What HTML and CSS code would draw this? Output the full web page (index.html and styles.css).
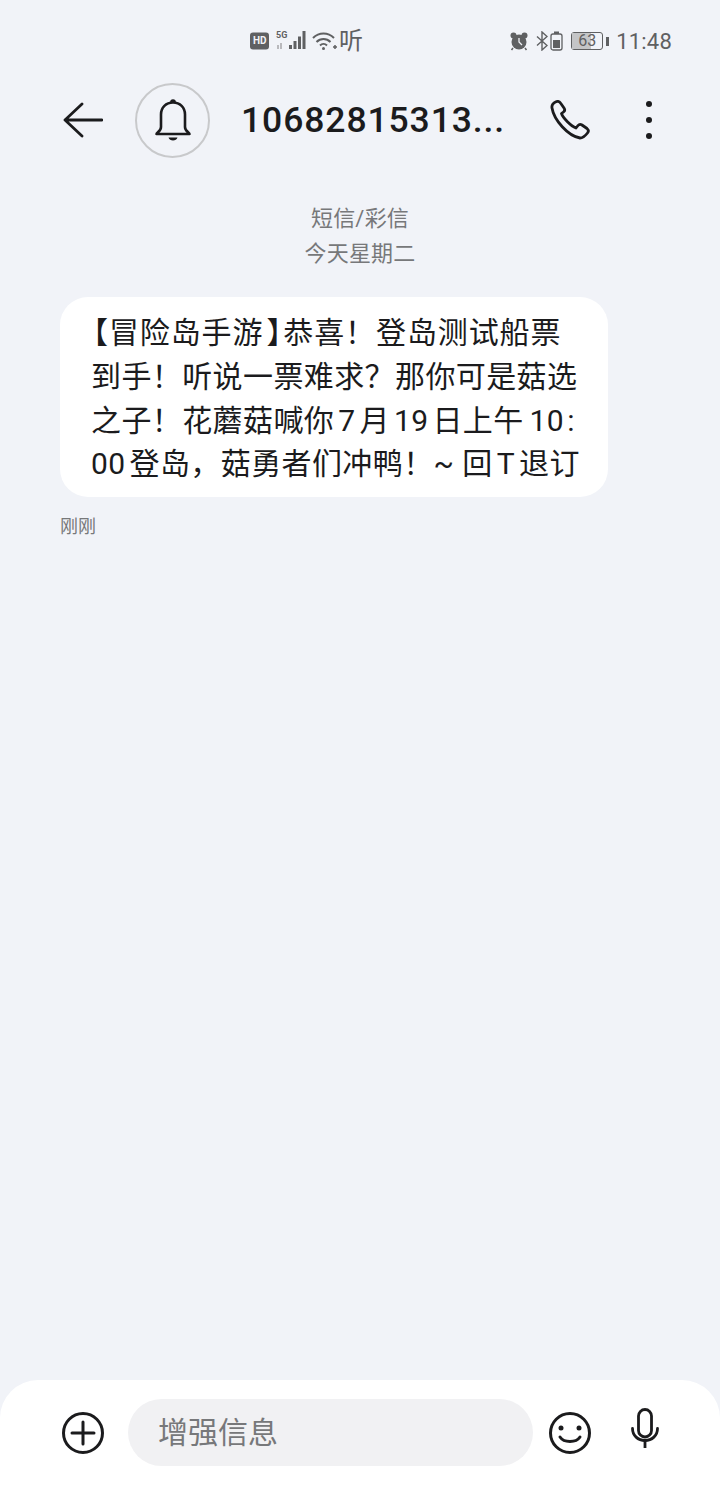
FILE: index.html
```html
<!DOCTYPE html>
<html lang="zh-CN">
<head>
	<meta charset="UTF-8">
	<title>短信</title>
	<link rel="stylesheet" href="styles.css">
</head>
<body>
	<div class="screen">
		<div class="statusBar">
			<div class="statusCenter">
				<svg class="hdIcon" width="20" height="18" viewBox="0 0 20 18"><rect x="0" y="0.5" width="19" height="17" rx="3" fill="#5f6062"/></svg>
				<span class="hdText">HD</span>
				<svg class="signalIcon" width="33" height="22" viewBox="0 0 33 22">
					<rect x="14" y="15" width="3" height="4" fill="#5f6062"/>
					<rect x="18.5" y="11" width="3" height="8" fill="#5f6062"/>
					<rect x="23" y="6.5" width="3" height="12.5" fill="#5f6062"/>
					<rect x="27.5" y="1" width="3" height="18" fill="#5f6062"/>
					<path d="M3 15v4M6 13v6" stroke="#a6a7a9" stroke-width="1.5" fill="none"/>
				</svg>
				<span class="fiveG">5G</span>
				<svg width="26" height="22" viewBox="0 0 26 22" fill="none" stroke="#5f6062" stroke-width="2">
					<path d="M1 8c6-6 15-6 21 0"/>
					<path d="M4.500 12c4-4 10-4 14 0"/>
					<path d="M8 15.500c2-2 5-2 7 0"/>
					<circle cx="11.500" cy="18.500" r="1.500" fill="#5f6062" stroke="none"/>
					<path d="M21 17h4M23 15v4" stroke-width="1.500"/>
				</svg>
				<span class="tingText">听</span>
			</div>
			<div class="statusRight">
				<svg width="20" height="20" viewBox="0 0 20 20">
					<circle cx="10" cy="11" r="7.500" fill="#5f6062"/>
					<circle cx="4.500" cy="4.500" r="3" fill="#5f6062"/>
					<circle cx="15.500" cy="4.500" r="3" fill="#5f6062"/>
					<path d="M10 7v4l3 3" stroke="#f1f3f8" stroke-width="1.300" fill="none"/>
					<path d="M4 17l-1.500 2M16 17l1.500 2" stroke="#5f6062" stroke-width="1.500"/>
				</svg>
				<svg class="btIcon" width="12" height="20" viewBox="0 0 12 20" fill="none" stroke="#5f6062" stroke-width="1.400">
					<path d="M1 5.500l10 9-5 4.500V1l5 4.500-10 9"/>
				</svg>
				<svg class="cellIcon" width="13" height="20" viewBox="0 0 13 20">
					<rect x="1" y="3" width="11" height="16" rx="2" fill="none" stroke="#5f6062" stroke-width="1.300"/>
					<rect x="4" y="0.500" width="5" height="2.500" fill="#5f6062"/>
					<rect x="3" y="9" width="7" height="8" fill="#5f6062"/>
				</svg>
				<div class="battery">
					<div class="batteryBox">
						<div class="batteryFill"></div>
						<span class="batteryNum">63</span>
					</div>
					<div class="batteryTip"></div>
				</div>
				<span class="clock">11:48</span>
			</div>
		</div>

		<div class="titleBar">
			<svg class="backIcon" width="40" height="36" viewBox="0 0 40 36" fill="none" stroke="#1b1b1d" stroke-width="2.800" stroke-linecap="round" stroke-linejoin="round">
				<path d="M19 2L2 18l17 16M2 18h37"/>
			</svg>
			<div class="avatar">
				<svg width="36" height="42" viewBox="0 0 36 42" fill="none" stroke="#1b1b1d" stroke-width="2.600" stroke-linejoin="round">
					<path d="M1.500 35c0-1.500 4.500-2.500 4.500-7V15.500C6 8.500 11 3.500 18 3.500S30 8.500 30 15.500V28c0 4.500 4.500 5.500 4.500 7z"/>
					<path d="M16.500 3c0-2 3-2 3 0" fill="#1b1b1d"/>
					<path d="M13.500 38.500h9c-1 4-8 4-9 0z" fill="#1b1b1d" stroke="none"/>
				</svg>
			</div>
			<div class="contactName">10682815313...</div>
			<svg class="phoneIcon" width="40" height="40" viewBox="0 0 40 40" fill="none" stroke="#1b1b1d" stroke-width="2.800" stroke-linejoin="round">
				<path d="M2 8C1.500 5 3 3 6 1.700 8 1 9.500 1.500 10.500 3L14 8c1 1.500.8 3-.5 4l-2 1.500C13 18 21 26 26 28l2-2.500c1-1.200 2.500-1.500 4-.5l5 3.500c1.500 1.200 1.700 3 .5 4.500-2 2.500-4.500 5-7.500 5C18 36 4 20 2 8z"/>
			</svg>
			<div class="moreIcon"><span></span><span></span><span></span></div>
		</div>

		<div class="dateInfo">
			<div>短信/彩信</div>
			<div>今天星期二</div>
		</div>

		<div class="bubble">
			<div class="line lineWide"><span class="bracketOpen">【</span>冒险岛手游<span class="bracketClose">】</span>恭喜！登岛测试船票</div>
			<div class="line">到手！听说一票难求？那你可是菇选</div>
			<div class="line">之子！花蘑菇喊你<span class="num">7</span>月<span class="num">19</span>日上午<span class="numLast">10</span><span class="colon">:</span></div>
			<div class="line"><span class="numFirst">00</span>登岛，菇勇者们冲鸭！<span class="tilde">~</span>回<span class="num">T</span>退订</div>
		</div>
		<div class="msgTime">刚刚</div>

		<div class="bottomBar">
			<svg width="42" height="42" viewBox="0 0 42 42" fill="none" stroke="#1b1b1d" stroke-width="3">
				<circle cx="21" cy="21" r="19.500"/>
				<path d="M21 10v22M10 21h22" stroke-linecap="round"/>
			</svg>
			<div class="inputBox">增强信息</div>
			<svg class="smile" width="42" height="42" viewBox="0 0 42 42" fill="none" stroke="#1b1b1d" stroke-width="3">
				<circle cx="21" cy="21" r="19.500"/>
				<circle cx="12" cy="16" r="2.500" fill="#1b1b1d" stroke="none"/>
				<circle cx="30" cy="16" r="2.500" fill="#1b1b1d" stroke="none"/>
				<path d="M11 25c4 6 16 6 20 0" stroke-linecap="round"/>
			</svg>
			<svg class="mic" width="30" height="42" viewBox="0 0 30 42" fill="none" stroke="#1b1b1d" stroke-width="2.800" stroke-linecap="round">
				<rect x="8.500" y="1.500" width="13" height="27.500" rx="6.500"/>
				<path d="M2.500 20.500c0 7 5.500 12 12.500 12s12.500-5 12.500-12"/>
				<path d="M15 32.500V40" stroke-linecap="butt"/>
			</svg>
		</div>
	</div>
</body>
</html>
```

FILE: styles.css
```css
* {
	margin: 0;
	padding: 0;
	box-sizing: border-box;
	font-family: Roboto, "Noto Sans CJK SC", sans-serif;
}

html, body {
	height: 100%;
}

body {
	background-color: #f1f3f8;
}

.screen {
	width: 720px;
	height: 1485px;
	display: flex;
	flex-direction: column;
	overflow: hidden;
}

/* status bar */
.statusBar {
	height: 82px;
	padding: 30px 48px 0 250px;
	display: flex;
	justify-content: space-between;
	align-items: flex-start;
}

.statusCenter, .statusRight {
	display: flex;
	align-items: center;
	height: 22px;
	position: relative;
}

.hdIcon {
	margin-right: 5px;
}

.hdText {
	position: absolute;
	left: 3px;
	top: 5px;
	font-size: 10px;
	font-weight: 700;
	color: #f1f3f8;
}

.signalIcon {
	margin-right: 4px;
}

.fiveG {
	position: absolute;
	left: 26px;
	top: 0;
	font-size: 9px;
	font-weight: 700;
	color: #5f6062;
}

.tingText {
	margin-left: 1px;
	font-size: 24px;
	line-height: 22px;
	color: #5f6062;
}

.statusRight svg {
	margin-right: 7px;
}

.statusRight .btIcon {
	margin-right: 2px;
}

.statusRight .cellIcon {
	margin-right: 5px;
}

.battery {
	display: flex;
	align-items: center;
	margin: 0 7px 0 3px;
}

.batteryBox {
	width: 32px;
	height: 18px;
	border: 1.500px solid #5f6062;
	border-radius: 3px;
	position: relative;
}

.batteryFill {
	width: 63%;
	height: 100%;
	background-color: #c4c5c7;
}

.batteryNum {
	position: absolute;
	left: 0;
	right: 0;
	top: 0;
	text-align: center;
	font-size: 16px;
	line-height: 15px;
	color: #5f6062;
}

.batteryTip {
	width: 3px;
	height: 9px;
	margin-left: 3px;
	background-color: #5f6062;
}

.clock {
	font-size: 22px;
	letter-spacing: 0.2px;
	color: #5f6062;
}

/* title bar */
.titleBar {
	height: 76px;
	padding-left: 63px;
	display: flex;
	align-items: center;
}

.avatar {
	width: 75px;
	height: 75px;
	margin-left: 32px;
	border: 2px solid #c8c9cb;
	border-radius: 50%;
	display: flex;
	align-items: center;
	justify-content: center;
}

.contactName {
	width: 308px;
	margin-left: 31px;
	font-size: 35.500px;
	font-weight: 500;
	letter-spacing: 0.9px;
	color: #1b1b1d;
	white-space: nowrap;
}

.phoneIcon {
	margin-left: 1px;
}

.moreIcon {
	margin-left: 56px;
	display: flex;
	flex-direction: column;
	gap: 10px;
}

.moreIcon span {
	width: 6px;
	height: 6px;
	border-radius: 50%;
	background-color: #1b1b1d;
}

/* date above messages */
.dateInfo {
	margin-top: 43px;
	text-align: center;
	font-size: 22px;
	line-height: 35px;
	letter-spacing: 0.2px;
	color: #77787a;
}

/* message */
.bubble {
	width: 548px;
	margin: 26px 0 0 60px;
	padding: 14px 0 11px 31px;
	background-color: #fff;
	border-radius: 28px;
}

.line {
	font-size: 30px;
	line-height: 43.750px;
	letter-spacing: 0.4px;
	color: #1b1b1d;
	white-space: nowrap;
}

.lineWide {
	letter-spacing: 0.9px;
}

.bracketOpen {
	font-feature-settings: "halt";
	padding-left: 2px;
}

.bracketClose {
	font-feature-settings: "halt";
	padding-left: 3px;
	padding-right: 1px;
}

.num {
	margin: 0 4px;
}

.numFirst {
	margin-right: 4px;
}

.numLast {
	margin-left: 6px;
}

.colon {
	margin-left: 3px;
}

.tilde {
	margin-right: 8px;
}

.msgTime {
	margin: 18px 0 0 60px;
	font-size: 18px;
	line-height: 24px;
	color: #77787a;
}

/* input row */
.bottomBar {
	margin-top: auto;
	height: 105px;
	padding: 19px 0 0 62px;
	background-color: #fff;
	border-radius: 38px 38px 0 0;
	display: flex;
	align-items: flex-start;
}

.bottomBar svg {
	margin-top: 13px;
}

.inputBox {
	width: 405px;
	height: 67px;
	margin-left: 24px;
	padding-left: 30px;
	background-color: #f1f1f3;
	border-radius: 34px;
	font-size: 30px;
	line-height: 68px;
	color: #77787a;
}

.smile {
	margin-left: 16px;
}

.bottomBar .mic {
	margin-top: 9px;
	margin-left: 39px;
}
```
